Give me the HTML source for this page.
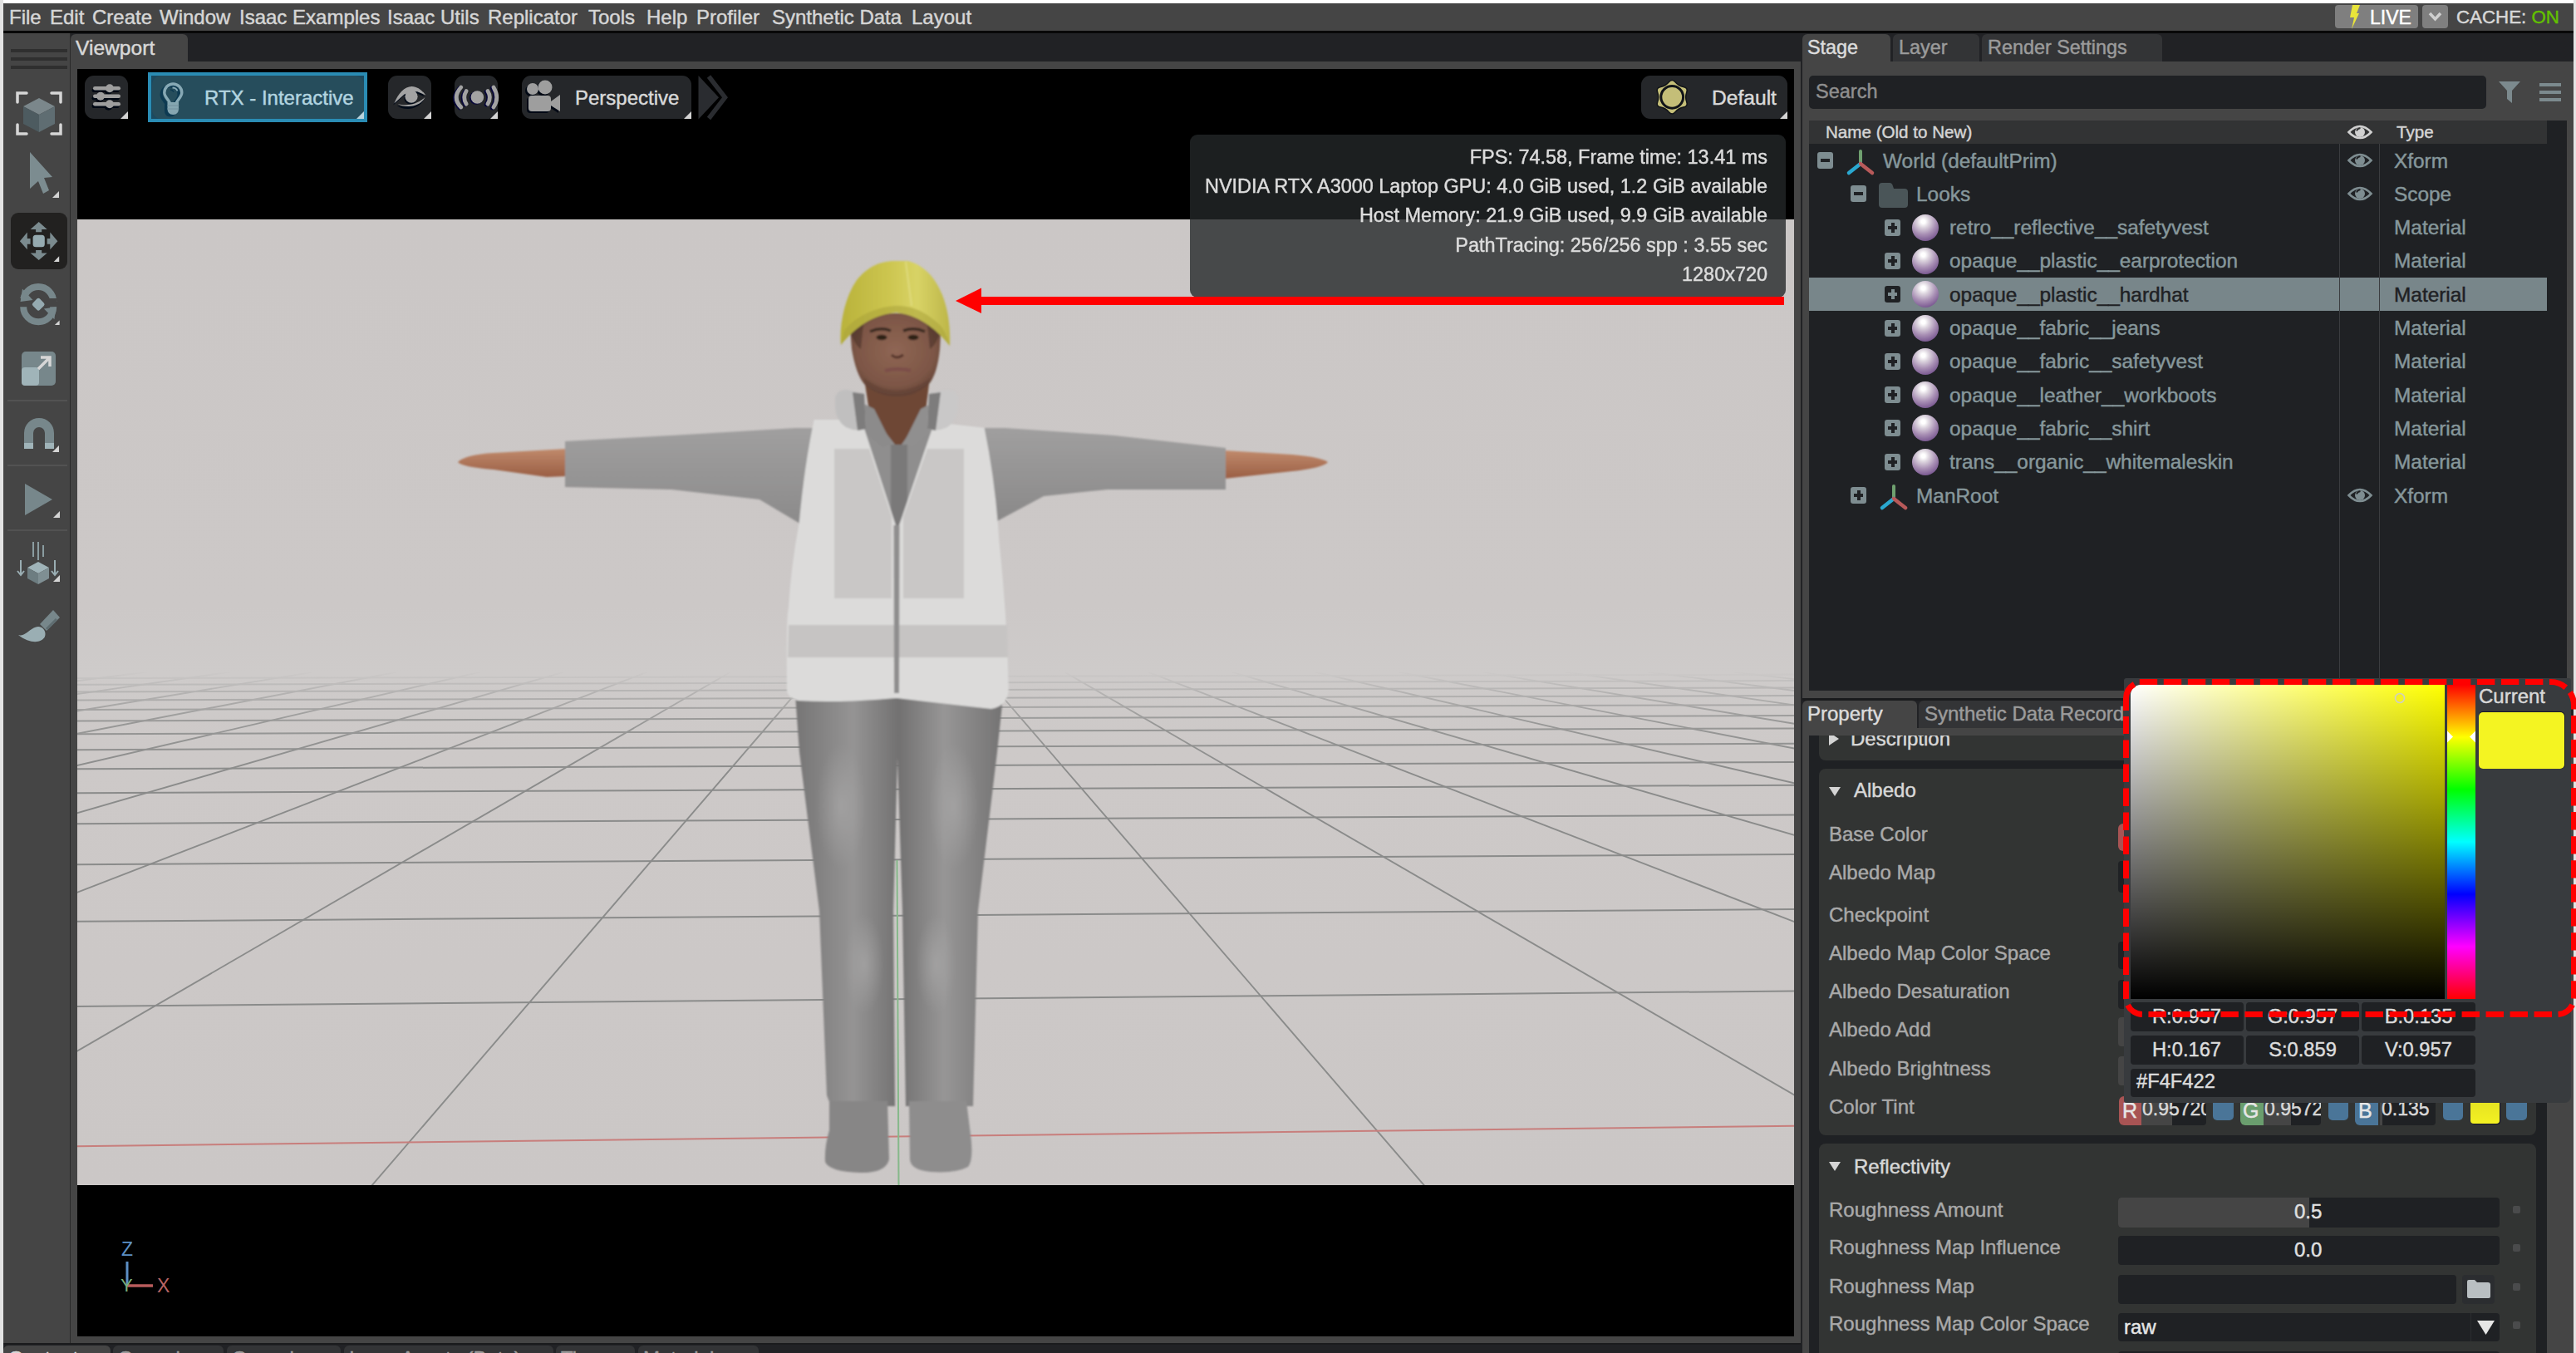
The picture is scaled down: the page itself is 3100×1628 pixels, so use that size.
<!DOCTYPE html>
<html><head><meta charset="utf-8">
<style>
*{margin:0;padding:0;box-sizing:border-box}
html,body{width:3100px;height:1628px;overflow:hidden;background:#ffffff;font-family:"Liberation Sans",sans-serif;font-size:24px;color:#d6d6d6;-webkit-text-stroke-width:0.45px}
.a{position:absolute}
.t{position:absolute;white-space:pre;line-height:1}
svg{position:absolute;overflow:visible}
.btn{position:absolute;background:#25272a;border-radius:11px}
.corner{position:absolute;width:0;height:0;border-left:9px solid transparent;border-bottom:9px solid #d4d4d4}
.tree{color:#86979b}
.row{position:absolute;left:2177px;width:888px;height:40px}
.pm{position:absolute;width:19px;height:20px;background:#7e8d91;border-radius:3px}
.pm:before{content:"";position:absolute;left:4px;top:8px;width:11px;height:4px;background:#1f2124}
.plus:after{content:"";position:absolute;left:8px;top:4px;width:3px;height:12px;background:#1f2124}
.sph{position:absolute;width:32px;height:32px;border-radius:50%;background:radial-gradient(circle at 42% 27%,#ffffff 0,#ffffff 8%,#dcd4de 24%,#a88fb4 52%,#7c5b93 78%,#674680 100%)}
.lbl{position:absolute;white-space:pre;line-height:1;color:#a9a9a9}
.fld{position:absolute;background:#1f2124;border-radius:4px}
</style></head><body>
<!-- outer light borders -->
<div class="a" style="left:0;top:0;width:4px;height:1628px;background:#e3e3e3"></div>
<div class="a" style="left:3097px;top:0;width:3px;height:1628px;background:#e3e3e3"></div>

<!-- ============ MENU BAR ============ -->
<div class="a" style="left:4px;top:4px;width:3093px;height:33px;background:#454545"></div>
<div class="a" style="left:4px;top:37px;width:3093px;height:3px;background:#080808"></div>
<div class="t" style="left:11px;top:9px">File</div>
<div class="t" style="left:60px;top:9px">Edit</div>
<div class="t" style="left:111px;top:9px">Create</div>
<div class="t" style="left:192px;top:9px">Window</div>
<div class="t" style="left:288px;top:9px">Isaac Examples</div>
<div class="t" style="left:466px;top:9px">Isaac Utils</div>
<div class="t" style="left:587px;top:9px">Replicator</div>
<div class="t" style="left:708px;top:9px">Tools</div>
<div class="t" style="left:778px;top:9px">Help</div>
<div class="t" style="left:838px;top:9px">Profiler</div>
<div class="t" style="left:929px;top:9px">Synthetic Data</div>
<div class="t" style="left:1097px;top:9px">Layout</div>
<!-- LIVE / CACHE -->
<div class="a" style="left:2810px;top:6px;width:100px;height:28px;background:#7f7f7f;border-radius:4px"></div>
<svg style="left:2825px;top:6px" width="16" height="29" viewBox="0 0 16 29"><path d="M6 0 L15 0 L11 10 L14 10 L5 29 L8 15 L3 15 Z" fill="#e8e43a"/></svg>
<div class="t" style="left:2852px;top:10px;font-size:23px;color:#ffffff">LIVE</div>
<div class="a" style="left:2915px;top:6px;width:31px;height:28px;background:#7f7f7f;border-radius:4px"></div>
<svg style="left:2922px;top:14px" width="17" height="12" viewBox="0 0 17 12"><path d="M2 2 L8.5 9 L15 2" stroke="#cfcfcf" stroke-width="3.5" fill="none"/></svg>
<div class="t" style="left:2956px;top:10px;font-size:22.3px;color:#d8d8d8">CACHE: <span style="color:#62c100">ON</span></div>

<!-- dark base for tab bars -->
<div class="a" style="left:4px;top:40px;width:3093px;height:1588px;background:#212225"></div>

<!-- ============ LEFT TOOLBAR ============ -->
<div class="a" style="left:4px;top:40px;width:80px;height:1576px;background:#454545"></div>
<div class="a" style="left:84px;top:40px;width:1px;height:1576px;background:#2a2a2a"></div>
<div class="a" style="left:13px;top:59px;width:68px;height:4px;background:#2f2f2f"></div>
<div class="a" style="left:13px;top:69px;width:68px;height:4px;background:#2f2f2f"></div>
<div class="a" style="left:13px;top:79px;width:68px;height:4px;background:#2f2f2f"></div>
<!-- frame icon -->
<svg style="left:19px;top:109px" width="56" height="55" viewBox="0 0 56 55">
 <path d="M2 14 V3 H13 M43 3 H54 V14 M54 41 V52 H43 M13 52 H2 V41" stroke="#d6d6d6" stroke-width="3.5" fill="none" stroke-linecap="round"/>
 <path d="M28 9 L47 19 L28 29 L9 19 Z" fill="#7b878b"/>
 <path d="M9 19 L28 29 L28 50 L9 40 Z" fill="#4d5b60"/>
 <path d="M47 19 L28 29 L28 50 L47 40 Z" fill="#5f6d72"/>
</svg>
<!-- select arrow -->
<svg style="left:33px;top:180px" width="40" height="60" viewBox="0 0 40 60">
 <path d="M3 3 L30 33 L20 34 L26 49 L19 53 L13 38 L3 47 Z" fill="#7c8c90"/>
 <path d="M38 50 L38 58 L30 58 Z" fill="#d4d4d4"/>
</svg>
<!-- move (active) -->
<div class="a" style="left:13px;top:256px;width:68px;height:68px;background:#222120;border-radius:9px"></div>
<svg style="left:13px;top:256px" width="68" height="68" viewBox="13 256 68 68">
 <g fill="#7b8b8f">
  <path d="M46.7 267.1 L56.7 276 L50.2 276 L50.2 279.3 L43.1 279.3 L43.1 276 L36.6 276 Z"/>
  <path d="M46.7 313 L56.7 304.4 L50.2 304.4 L50.2 301 L43.1 301 L43.1 304.4 L36.6 304.4 Z"/>
  <path d="M23.9 290.2 L32.8 279.6 L32.8 287 L36.6 287 L36.6 293.8 L32.8 293.8 L32.8 300.3 Z"/>
  <path d="M69.4 290.2 L60.3 279.6 L60.3 287 L56.7 287 L56.7 293.8 L60.3 293.8 L60.3 300.3 Z"/>
 </g>
 <rect x="39.6" y="282.8" width="14.2" height="14.5" rx="3.5" fill="#95aab0"/>
 <path d="M71.2 308.2 L71.2 315 L64.7 315 Z" fill="#d4d4d4"/>
</svg>
<!-- rotate -->
<svg style="left:13px;top:336px" width="64" height="60" viewBox="13 336 64 60">
 <path d="M28 363.1 A18 18 0 0 1 64.2 363.1" stroke="#77878b" stroke-width="8" fill="none"/>
 <path d="M64.2 369.3 A18 18 0 0 1 28.2 369.3" stroke="#77878b" stroke-width="8" fill="none"/>
 <rect x="24" y="359" width="44" height="4" fill="#454545"/>
 <path d="M27 347.6 L24.5 363 L39.5 361 Z" fill="#77878b"/>
 <path d="M67.4 369.3 L52.9 371.4 L65.4 384.3 Z" fill="#77878b"/>
 <rect x="40.3" y="360.3" width="11.8" height="11.8" rx="2.5" transform="rotate(45 46.2 366.2)" fill="#95aab0"/>
 <path d="M71.6 385.4 L71.6 391 L65.9 391 Z" fill="#d4d4d4"/>
</svg>
<!-- scale -->
<svg style="left:26px;top:423px" width="42" height="42" viewBox="0 0 42 42">
 <rect x="0" y="0" width="41" height="41" rx="5" fill="#77878b"/>
 <rect x="0" y="19" width="21" height="22" rx="4" fill="#a0b4b9"/>
 <path d="M20 21 L34 7 M23 7 H34 V18" stroke="#d6d6d6" stroke-width="3.5" fill="none"/>
</svg>
<div class="a" style="left:9px;top:481px;width:72px;height:2px;background:#525252"></div>
<!-- magnet -->
<svg style="left:28px;top:503px" width="44" height="42" viewBox="0 0 44 42">
 <path d="M1 37 V18 A18 18 0 0 1 37 18 V37 H26 V18 A7 7 0 0 0 12 18 V37 Z" fill="#77878b"/>
 <rect x="1" y="30" width="11" height="7" fill="#a0b4b9"/>
 <rect x="26" y="30" width="11" height="7" fill="#a0b4b9"/>
 <path d="M43 33 L43 41 L35 41 Z" fill="#d4d4d4"/>
</svg>
<div class="a" style="left:9px;top:559px;width:72px;height:2px;background:#525252"></div>
<!-- play -->
<svg style="left:29px;top:581px" width="44" height="44" viewBox="0 0 44 44">
 <path d="M1 1 L34 20 L1 39 Z" fill="#77878b"/>
 <path d="M43 34 L43 42 L35 42 Z" fill="#d4d4d4"/>
</svg>
<div class="a" style="left:9px;top:637px;width:72px;height:2px;background:#525252"></div>
<!-- drop -->
<svg style="left:20px;top:652px" width="56" height="56" viewBox="0 0 56 56">
 <path d="M20 0 V18 M26 0 V22 M32 4 V18" stroke="#8a9ca0" stroke-width="2" fill="none"/>
 <path d="M26 24 L39 31 L26 38 L13 31 Z" fill="#a0b4b9"/>
 <path d="M13 31 L26 38 V51 L13 44 Z" fill="#6d7d81"/>
 <path d="M39 31 L26 38 V51 L39 44 Z" fill="#7f8f93"/>
 <path d="M5 22 V40 M1 35 L5 40 L9 35 M46 22 V40 M42 35 L46 40 L50 35" stroke="#9aaeb3" stroke-width="2" fill="none"/>
 <path d="M52 40 L52 48 L44 48 Z" fill="#d4d4d4"/>
</svg>
<!-- paint -->
<svg style="left:22px;top:733px" width="50" height="42" viewBox="0 0 50 42">
 <path d="M26 18 L42 1 L50 10 L34 26 Z" fill="#77878b"/>
 <path d="M34 24 L46 12" stroke="#5f6d71" stroke-width="3"/>
 <path d="M0 31 C8 34 14 22 24 21 C30 21 34 27 32 33 C28 41 14 42 0 31 Z" fill="#9aaeb3"/>
</svg>

<!-- ============ VIEWPORT PANEL ============ -->
<div class="a" style="left:85px;top:41px;width:141px;height:33px;background:#454545;border-radius:6px 6px 0 0"></div>
<div class="t" style="left:91px;top:46px;font-size:24.6px;color:#d8d8d8">Viewport</div>
<div class="a" style="left:85px;top:74px;width:2082px;height:1542px;background:#454545"></div>
<div class="a" id="vp" style="left:93px;top:83px;width:2066px;height:1525px;background:#000000;overflow:hidden">
<!--RENDER-->
<svg style="left:-93px;top:-83px" width="3100" height="1628" viewBox="0 0 3100 1628">
<defs>
<linearGradient id="bg" x1="0" y1="264" x2="0" y2="1426" gradientUnits="userSpaceOnUse">
 <stop offset="0" stop-color="#cbc7c6"/><stop offset="0.4" stop-color="#ccc8c7"/><stop offset="0.47" stop-color="#cecbca"/><stop offset="0.55" stop-color="#cdc9c8"/><stop offset="1" stop-color="#cbc7c6"/>
</linearGradient>
<linearGradient id="fog" x1="0" y1="808" x2="0" y2="930" gradientUnits="userSpaceOnUse">
 <stop offset="0" stop-color="#fff" stop-opacity="0"/><stop offset="0.16" stop-color="#fff" stop-opacity="0.3"/><stop offset="0.5" stop-color="#fff" stop-opacity="0.8"/><stop offset="1" stop-color="#fff" stop-opacity="1"/>
</linearGradient>
<mask id="fogm" maskUnits="userSpaceOnUse" x="0" y="0" width="3100" height="1628"><rect x="93" y="264" width="2066" height="1162" fill="url(#fog)"/></mask>
<clipPath id="rc"><rect x="93" y="264" width="2066" height="1162"/></clipPath>
<linearGradient id="hat" x1="0" y1="0" x2="1" y2="0">
 <stop offset="0" stop-color="#b9b23a"/><stop offset="0.45" stop-color="#cdc650"/><stop offset="0.7" stop-color="#d8d366"/><stop offset="1" stop-color="#bdb648"/>
</linearGradient>
<linearGradient id="skin" x1="0" y1="0" x2="0" y2="1">
 <stop offset="0" stop-color="#6b4c3e"/><stop offset="0.5" stop-color="#8a6352"/><stop offset="1" stop-color="#7a5444"/>
</linearGradient>
<linearGradient id="hand" x1="0" y1="0" x2="0" y2="1">
 <stop offset="0" stop-color="#c08a6c"/><stop offset="1" stop-color="#9a5e44"/>
</linearGradient>
<linearGradient id="sleeve" x1="0" y1="0" x2="0" y2="1">
 <stop offset="0" stop-color="#a09f9f"/><stop offset="1" stop-color="#8a8989"/>
</linearGradient>
<linearGradient id="jeans" x1="0" y1="0" x2="1" y2="0">
 <stop offset="0" stop-color="#767575"/><stop offset="0.28" stop-color="#959494"/><stop offset="0.5" stop-color="#727171"/><stop offset="0.72" stop-color="#979696"/><stop offset="1" stop-color="#747373"/>
</linearGradient>
<linearGradient id="vest" x1="0" y1="0" x2="1" y2="0">
 <stop offset="0" stop-color="#d0cecd"/><stop offset="0.3" stop-color="#dddbdb"/><stop offset="0.7" stop-color="#dcdada"/><stop offset="1" stop-color="#cfcdcc"/>
</linearGradient>
<filter id="soft" x="-5%" y="-5%" width="110%" height="110%"><feGaussianBlur stdDeviation="1.0"/></filter>
</defs>
<g clip-path="url(#rc)">
<rect x="93" y="264" width="2066" height="1162" fill="url(#bg)"/>
<g mask="url(#fogm)" opacity="0.85"><line x1="93" y1="1210.9" x2="2159" y2="1192.5" stroke="#7f8180" stroke-width="2.0"/><line x1="93" y1="1108.8" x2="2159" y2="1094.0" stroke="#7f8180" stroke-width="2.0"/><line x1="93" y1="1040.3" x2="2159" y2="1028.0" stroke="#7f8180" stroke-width="2.0"/><line x1="93" y1="991.2" x2="2159" y2="980.5" stroke="#7f8180" stroke-width="2.0"/><line x1="93" y1="954.2" x2="2159" y2="944.8" stroke="#7f8180" stroke-width="2.0"/><line x1="93" y1="925.3" x2="2159" y2="917.0" stroke="#7f8180" stroke-width="2.0"/><line x1="93" y1="902.2" x2="2159" y2="894.7" stroke="#7f8180" stroke-width="2.0"/><line x1="93" y1="883.2" x2="2159" y2="876.4" stroke="#7f8180" stroke-width="2.0"/><line x1="93" y1="867.4" x2="2159" y2="861.1" stroke="#7f8180" stroke-width="2.0"/><line x1="93" y1="854.0" x2="2159" y2="848.2" stroke="#7f8180" stroke-width="2.0"/><line x1="93" y1="842.5" x2="2159" y2="837.1" stroke="#7f8180" stroke-width="2.0"/><line x1="93" y1="832.5" x2="2159" y2="827.5" stroke="#7f8180" stroke-width="2.0"/><line x1="93" y1="823.8" x2="2159" y2="819.1" stroke="#7f8180" stroke-width="2.0"/><line x1="93" y1="816.1" x2="2159" y2="811.6" stroke="#7f8180" stroke-width="2.0"/><line x1="1080.0" y1="692.0" x2="-17931.8" y2="1427" stroke="#7f8180" stroke-width="1.9"/><line x1="1080.0" y1="692.0" x2="-17298.0" y2="1427" stroke="#7f8180" stroke-width="1.9"/><line x1="1080.0" y1="692.0" x2="-16664.2" y2="1427" stroke="#7f8180" stroke-width="1.9"/><line x1="1080.0" y1="692.0" x2="-16030.5" y2="1427" stroke="#7f8180" stroke-width="1.9"/><line x1="1080.0" y1="692.0" x2="-15396.8" y2="1427" stroke="#7f8180" stroke-width="1.9"/><line x1="1080.0" y1="692.0" x2="-14763.0" y2="1427" stroke="#7f8180" stroke-width="1.9"/><line x1="1080.0" y1="692.0" x2="-14129.2" y2="1427" stroke="#7f8180" stroke-width="1.9"/><line x1="1080.0" y1="692.0" x2="-13495.5" y2="1427" stroke="#7f8180" stroke-width="1.9"/><line x1="1080.0" y1="692.0" x2="-12861.8" y2="1427" stroke="#7f8180" stroke-width="1.9"/><line x1="1080.0" y1="692.0" x2="-12228.0" y2="1427" stroke="#7f8180" stroke-width="1.9"/><line x1="1080.0" y1="692.0" x2="-11594.2" y2="1427" stroke="#7f8180" stroke-width="1.9"/><line x1="1080.0" y1="692.0" x2="-10960.5" y2="1427" stroke="#7f8180" stroke-width="1.9"/><line x1="1080.0" y1="692.0" x2="-10326.8" y2="1427" stroke="#7f8180" stroke-width="1.9"/><line x1="1080.0" y1="692.0" x2="-9693.0" y2="1427" stroke="#7f8180" stroke-width="1.9"/><line x1="1080.0" y1="692.0" x2="-9059.2" y2="1427" stroke="#7f8180" stroke-width="1.9"/><line x1="1080.0" y1="692.0" x2="-8425.5" y2="1427" stroke="#7f8180" stroke-width="1.9"/><line x1="1080.0" y1="692.0" x2="-7791.8" y2="1427" stroke="#7f8180" stroke-width="1.9"/><line x1="1080.0" y1="692.0" x2="-7158.0" y2="1427" stroke="#7f8180" stroke-width="1.9"/><line x1="1080.0" y1="692.0" x2="-6524.2" y2="1427" stroke="#7f8180" stroke-width="1.9"/><line x1="1080.0" y1="692.0" x2="-5890.5" y2="1427" stroke="#7f8180" stroke-width="1.9"/><line x1="1080.0" y1="692.0" x2="-5256.8" y2="1427" stroke="#7f8180" stroke-width="1.9"/><line x1="1080.0" y1="692.0" x2="-4623.0" y2="1427" stroke="#7f8180" stroke-width="1.9"/><line x1="1080.0" y1="692.0" x2="-3989.2" y2="1427" stroke="#7f8180" stroke-width="1.9"/><line x1="1080.0" y1="692.0" x2="-3355.5" y2="1427" stroke="#7f8180" stroke-width="1.9"/><line x1="1080.0" y1="692.0" x2="-2721.8" y2="1427" stroke="#7f8180" stroke-width="1.9"/><line x1="1080.0" y1="692.0" x2="-2088.0" y2="1427" stroke="#7f8180" stroke-width="1.9"/><line x1="1080.0" y1="692.0" x2="-1454.2" y2="1427" stroke="#7f8180" stroke-width="1.9"/><line x1="1080.0" y1="692.0" x2="-820.5" y2="1427" stroke="#7f8180" stroke-width="1.9"/><line x1="1080.0" y1="692.0" x2="-186.8" y2="1427" stroke="#7f8180" stroke-width="1.9"/><line x1="1080.0" y1="692.0" x2="447.0" y2="1427" stroke="#7f8180" stroke-width="1.9"/><line x1="1080.0" y1="692.0" x2="1714.5" y2="1427" stroke="#7f8180" stroke-width="1.9"/><line x1="1080.0" y1="692.0" x2="2348.2" y2="1427" stroke="#7f8180" stroke-width="1.9"/><line x1="1080.0" y1="692.0" x2="2982.0" y2="1427" stroke="#7f8180" stroke-width="1.9"/><line x1="1080.0" y1="692.0" x2="3615.8" y2="1427" stroke="#7f8180" stroke-width="1.9"/><line x1="1080.0" y1="692.0" x2="4249.5" y2="1427" stroke="#7f8180" stroke-width="1.9"/><line x1="1080.0" y1="692.0" x2="4883.2" y2="1427" stroke="#7f8180" stroke-width="1.9"/><line x1="1080.0" y1="692.0" x2="5517.0" y2="1427" stroke="#7f8180" stroke-width="1.9"/><line x1="1080.0" y1="692.0" x2="6150.8" y2="1427" stroke="#7f8180" stroke-width="1.9"/><line x1="1080.0" y1="692.0" x2="6784.5" y2="1427" stroke="#7f8180" stroke-width="1.9"/><line x1="1080.0" y1="692.0" x2="7418.2" y2="1427" stroke="#7f8180" stroke-width="1.9"/><line x1="1080.0" y1="692.0" x2="8052.0" y2="1427" stroke="#7f8180" stroke-width="1.9"/><line x1="1080.0" y1="692.0" x2="8685.8" y2="1427" stroke="#7f8180" stroke-width="1.9"/><line x1="1080.0" y1="692.0" x2="9319.5" y2="1427" stroke="#7f8180" stroke-width="1.9"/><line x1="1080.0" y1="692.0" x2="9953.2" y2="1427" stroke="#7f8180" stroke-width="1.9"/><line x1="1080.0" y1="692.0" x2="10587.0" y2="1427" stroke="#7f8180" stroke-width="1.9"/><line x1="1080.0" y1="692.0" x2="11220.8" y2="1427" stroke="#7f8180" stroke-width="1.9"/><line x1="1080.0" y1="692.0" x2="11854.5" y2="1427" stroke="#7f8180" stroke-width="1.9"/><line x1="1080.0" y1="692.0" x2="12488.2" y2="1427" stroke="#7f8180" stroke-width="1.9"/><line x1="1080.0" y1="692.0" x2="13122.0" y2="1427" stroke="#7f8180" stroke-width="1.9"/><line x1="1080.0" y1="692.0" x2="13755.8" y2="1427" stroke="#7f8180" stroke-width="1.9"/><line x1="1080.0" y1="692.0" x2="14389.5" y2="1427" stroke="#7f8180" stroke-width="1.9"/><line x1="1080.0" y1="692.0" x2="15023.2" y2="1427" stroke="#7f8180" stroke-width="1.9"/><line x1="1080.0" y1="692.0" x2="15657.0" y2="1427" stroke="#7f8180" stroke-width="1.9"/><line x1="1080.0" y1="692.0" x2="16290.8" y2="1427" stroke="#7f8180" stroke-width="1.9"/><line x1="1080.0" y1="692.0" x2="16924.5" y2="1427" stroke="#7f8180" stroke-width="1.9"/><line x1="1080.0" y1="692.0" x2="17558.2" y2="1427" stroke="#7f8180" stroke-width="1.9"/><line x1="1080.0" y1="692.0" x2="18192.0" y2="1427" stroke="#7f8180" stroke-width="1.9"/><line x1="1080.0" y1="692.0" x2="18825.8" y2="1427" stroke="#7f8180" stroke-width="1.9"/><line x1="1080.0" y1="692.0" x2="19459.5" y2="1427" stroke="#7f8180" stroke-width="1.9"/><line x1="1080.0" y1="692.0" x2="20093.2" y2="1427" stroke="#7f8180" stroke-width="1.9"/></g>
<line x1="93" y1="1379.2" x2="2159" y2="1354.7" stroke="#c87e7c" stroke-width="2"/>
<line x1="1079.5" y1="1035" x2="1081.5" y2="1427" stroke="#86b88a" stroke-width="2"/>
<g id="figure" filter="url(#soft)">
 <!-- hands -->
 <path d="M551 556 Q560 547 594 545 L682 540 L682 573 L658 574 L594 565 Q556 562 551 556 Z" fill="url(#hand)"/>
 <path d="M1473 542 L1555 547 Q1590 550 1598 556 Q1592 563 1555 567 L1473 576 Z" fill="url(#hand)"/>
 <!-- sleeves -->
 <path d="M680 531 L808 524 L957 515 L990 515 L1000 560 L975 640 L961 629 L914 601 L808 589 L680 586 Z" fill="url(#sleeve)"/>
 <path d="M1170 515 L1210 515 L1341 524 L1475 539 L1475 589 L1333 589 L1256 597 L1200 627 L1175 600 Z" fill="url(#sleeve)"/>
 <!-- jeans -->
 <path d="M957 835 L1206 835 L1206 848 L1200 905 L1177 1096 L1171 1331 L1090 1331 L1086 1096 L1080 912 L1075 1096 L1077 1331 L1000 1331 L995 1318 L986 1096 L962 905 Z" fill="url(#jeans)"/>
 <defs><radialGradient id="hl"><stop offset="0" stop-color="#b0afaf" stop-opacity="0.55"/><stop offset="1" stop-color="#b0afaf" stop-opacity="0"/></radialGradient></defs>
 <ellipse cx="1012" cy="970" rx="30" ry="75" fill="url(#hl)"/>
 <ellipse cx="1148" cy="970" rx="30" ry="75" fill="url(#hl)"/>
 <ellipse cx="1040" cy="1160" rx="24" ry="60" fill="url(#hl)"/>
 <ellipse cx="1126" cy="1160" rx="24" ry="60" fill="url(#hl)"/>
 <!-- boots -->
 <path d="M998 1325 L1068 1325 L1070 1395 Q1066 1412 1035 1411 Q998 1410 993 1398 Q992 1380 998 1360 Z" fill="#878686"/>
 <path d="M1094 1325 L1163 1325 L1168 1365 Q1172 1395 1165 1404 Q1150 1412 1120 1410 Q1096 1408 1095 1395 Z" fill="#8e8d8d"/>
 <!-- shirt torso under vest -->
 <path d="M1030 495 L1130 495 L1130 640 L1030 640 Z" fill="#8f8e8e"/>
 <!-- neck skin -->
 <path d="M1041 462 L1118 462 L1114 495 L1081 540 L1046 495 Z" fill="#6e4734"/>
 <!-- collar -->
 <path d="M1036 484 L1052 492 L1073 534 L1062 538 L1040 520 Z" fill="#8c8b8b"/>
 <path d="M1124 484 L1108 492 L1087 534 L1098 538 L1120 520 Z" fill="#908f8f"/>
 <rect x="1072" y="535" width="20" height="98" fill="#7a7979"/>
 <!-- vest -->
 <path d="M979.7 505 L1036.6 505 L1078 632 L1082 632 L1124.4 508 L1184.6 514.8 Q1198 580 1202.4 651 Q1212 740 1213.8 830 Q1212 850 1192.7 853 Q1130 846 1079 840 Q1010 846 960 843 Q946 838 947 830 Q946 740 948.8 732.7 Q952 680 961.8 628.6 Q968 560 979.7 505 Z" fill="#dcdbda"/>
 <path d="M1004 540 L1046 540 L1073 622 L1073 720 L1004 720 Z" fill="#c9c7c6"/>
 <path d="M1087 622 L1116 540 L1160 540 L1160 720 L1087 720 Z" fill="#c9c7c6"/>
 <path d="M949 752 L1212 752 L1213 791 L948 791 Z" fill="#c6c4c3"/>
 <path d="M1075.5 632 L1082.5 632 L1082 834 L1076 834 Z" fill="#8f8e8e"/>
 <!-- earmuffs -->
 <path d="M1005 478 Q1008 468 1020 469 L1040 474 L1042 516 Q1030 520 1018 514 Q1006 506 1005 490 Z" fill="#c0bfbf"/>
 <path d="M1153 478 Q1150 468 1138 469 L1118 474 L1116 516 Q1128 520 1140 514 Q1152 506 1153 490 Z" fill="#c9c8c8"/>
 <path d="M1026 472 L1040 474 L1042 516 L1032 518 Z" fill="#7d7c7c"/>
 <path d="M1132 472 L1118 474 L1116 516 L1126 518 Z" fill="#7d7c7c"/>
 <!-- face -->
 <defs><radialGradient id="facegr" cx="0.5" cy="0.45" r="0.6"><stop offset="0" stop-color="#8f6654"/><stop offset="0.7" stop-color="#7d5646"/><stop offset="1" stop-color="#5e4034"/></radialGradient></defs>
 <path d="M1022 382 Q1077 372 1133 382 L1131 420 Q1128 450 1118 462 Q1100 478 1079 477 Q1055 477 1040 462 Q1030 450 1025 420 Z" fill="url(#facegr)"/>
 <path d="M1022 395 Q1028 380 1040 380 L1036 420 Q1028 415 1022 395 Z M1133 395 Q1127 380 1115 380 L1119 420 Q1127 415 1133 395 Z" fill="#4a3228" opacity="0.6"/>
 <path d="M1047 399 Q1060 393 1072 398 M1087 398 Q1100 393 1113 399" stroke="#3b2a22" stroke-width="3.5" fill="none"/>
 <ellipse cx="1061" cy="406" rx="6.5" ry="3.2" fill="#2e2019"/>
 <ellipse cx="1099" cy="406" rx="6.5" ry="3.2" fill="#2e2019"/>
 <path d="M1073 427 Q1079 433 1087 427" stroke="#553429" stroke-width="3" fill="none"/>
 <path d="M1065 446 Q1080 442 1096 446" stroke="#7c4e4a" stroke-width="4" fill="none"/>
 <path d="M1040 455 Q1079 485 1120 455 L1118 462 Q1100 478 1079 477 Q1055 477 1040 462 Z" fill="#5e3e32" opacity="0.5"/>
 <!-- hardhat -->
 <path d="M1012 415 C1010 395 1015 360 1031 337 C1045 320 1060 314 1078 314 L1092 314 C1110 318 1125 332 1134 355 C1141 372 1144 395 1143 416 C1130 400 1110 380 1079 376 C1050 378 1028 395 1012 415 Z" fill="url(#hat)"/>
 <path d="M1012 415 C1028 395 1050 378 1079 376 C1110 380 1130 400 1143 416 C1140 405 1136 396 1130 390 C1110 372 1095 368 1079 368 C1055 369 1030 380 1016 398 Z" fill="#a9a23a" opacity="0.55"/>
 <path d="M1090 315 L1097 368" stroke="#e6e290" stroke-width="2" opacity="0.6"/>
</g>

</g></svg>
</div>
<!-- settings button -->
<div class="btn" style="left:102px;top:91px;width:52px;height:52px"></div>
<div class="corner" style="left:145px;top:134px"></div>
<svg style="left:110px;top:101px" width="38" height="34" viewBox="0 0 38 34">
 <g fill="#000814" transform="translate(-1.5,2.5)">
  <rect x="2" y="3" width="33" height="4.5" rx="2.2"/><rect x="2" y="12.5" width="33" height="4.5" rx="2.2"/><rect x="2" y="22" width="33" height="4.5" rx="2.2"/>
  <circle cx="22" cy="5.2" r="5"/><circle cx="11" cy="14.7" r="5"/><circle cx="22" cy="24.2" r="5"/>
 </g>
 <g fill="#9e9e9e">
  <rect x="2" y="3" width="33" height="4.5" rx="2.2"/><rect x="2" y="12.5" width="33" height="4.5" rx="2.2"/><rect x="2" y="22" width="33" height="4.5" rx="2.2"/>
  <circle cx="22" cy="5.2" r="5"/><circle cx="11" cy="14.7" r="5"/><circle cx="22" cy="24.2" r="5"/>
 </g>
</svg>
<!-- RTX button -->
<div class="a" style="left:178px;top:87px;width:264px;height:60px;background:#2a8cb4"></div>
<div class="a" style="left:182px;top:91px;width:256px;height:52px;background:#1b4a60"></div>
<div class="a" style="left:183px;top:91px;width:255px;height:52px;background:#264d5c;border-radius:11px"></div>
<div class="corner" style="left:429px;top:134px;border-bottom-color:#b9d3dc"></div>
<svg style="left:185px;top:92px" width="45" height="52" viewBox="185 92 45 52">
 <g transform="translate(-3.5,2.5)">
  <path d="M204.5 124 C202 119 197.8 116 197.8 111.5 A10.5 10.5 0 0 1 218.8 111.5 C218.8 116 214.6 119 212.1 124" fill="none" stroke="#0d3a52" stroke-width="3.6"/>
  <path d="M201.5 123 H215 V131 Q215 137.5 208.3 138 Q201.5 137.5 201.5 131 Z" fill="#0d3a52"/>
 </g>
 <path d="M204.5 124 C202 119 197.8 116 197.8 111.5 A10.5 10.5 0 0 1 218.8 111.5 C218.8 116 214.6 119 212.1 124" fill="none" stroke="#87a9b5" stroke-width="3.4"/>
 <path d="M201.5 123 H215 V131 Q215 137.5 208.3 138 Q201.5 137.5 201.5 131 Z" fill="#85a6b1"/>
 <path d="M201 127 h14.5 M201 131 h14.5" stroke="#6f8e99" stroke-width="0.8"/>
 <path d="M207.5 105.5 Q212 105.5 213.5 109.5" stroke="#87a9b5" stroke-width="1.8" fill="none"/>
 <path d="M205 108 Q207.5 108 209 110.5" stroke="#0d3a52" stroke-width="1.5" fill="none"/>
</svg>
<div class="t" style="left:246px;top:105.5px;color:#b3d5e0">RTX - Interactive</div>
<!-- eye button -->
<div class="btn" style="left:467px;top:91px;width:52px;height:52px"></div>
<div class="corner" style="left:510px;top:134px"></div>
<svg style="left:462px;top:86px" width="60" height="60" viewBox="0 0 60 60">
 <g fill="#000a18" transform="translate(-1,2)">
  <path d="M12.3 38.6 C17 26 25 18 33.5 17.9 C41 18 46 23 50.3 28.5 L40.2 24.2 C36 24 30 24.5 24.6 27.4 Z"/>
  <path d="M16.5 39 C26 41.5 39 41 49.5 31 C46 38.5 38 43 30 43 C24 43 20 41.5 16.5 39 Z"/>
 </g>
 <circle cx="32" cy="32" r="7.6" fill="#000a18"/>
 <path d="M12.3 38.6 C17 26 25 18 33.5 17.9 C41 18 46 23 50.3 28.5 L40.2 24.2 C36 24 30 24.5 24.6 27.4 Z" fill="#a3a3a3"/>
 <circle cx="33" cy="30.2" r="7.6" fill="#a3a3a3"/>
 <path d="M16.5 39 C26 41.5 39 41 49.5 31 C46 38.5 38 42 30 42 C24 42 20 41 16.5 39 Z" fill="#a3a3a3"/>
</svg>
<!-- broadcast button -->
<div class="btn" style="left:547px;top:91px;width:52px;height:52px"></div>
<div class="corner" style="left:590px;top:134px"></div>
<svg style="left:540px;top:95px" width="70" height="45" viewBox="540 95 70 45">
 <g fill="none" stroke="#08083a" stroke-width="5" stroke-linecap="round" transform="translate(-1.6,0.8)">
  <path d="M554.8 105 Q543.6 117.6 554.8 129"/><path d="M561.2 109.5 Q556.2 117.3 561.2 125.1"/>
  <path d="M586.9 109.5 Q591.9 117.3 586.9 125.1"/><path d="M593.9 105 Q601.7 117.6 593.9 129"/>
 </g>
 <circle cx="573" cy="117.8" r="8" fill="#08083a"/>
 <g fill="none" stroke="#a3a3a3" stroke-width="4.8" stroke-linecap="round">
  <path d="M554.8 105 Q543.6 117.6 554.8 129"/><path d="M561.2 109.5 Q556.2 117.3 561.2 125.1"/>
  <path d="M586.9 109.5 Q591.9 117.3 586.9 125.1"/><path d="M593.9 105 Q601.7 117.6 593.9 129"/>
 </g>
 <circle cx="574.4" cy="117" r="7.8" fill="#a3a3a3"/>
</svg>
<!-- perspective button -->
<div class="btn" style="left:628px;top:91px;width:204px;height:52px"></div>
<div class="corner" style="left:823px;top:134px"></div>
<svg style="left:630px;top:96px" width="46" height="42" viewBox="0 0 46 42">
 <g fill="#000814" transform="translate(-2,2)">
  <circle cx="11" cy="11" r="7"/><circle cx="26" cy="9" r="8.5"/><rect x="6" y="19" width="27" height="19" rx="4"/><path d="M33 26 L44 18 V38 L33 31 Z"/>
 </g>
 <g fill="#9e9e9e">
  <circle cx="11" cy="11" r="7"/><circle cx="26" cy="9" r="8.5"/><rect x="6" y="19" width="27" height="19" rx="4"/><path d="M33 26 L44 18 V38 L33 31 Z"/>
 </g>
</svg>
<div class="t" style="left:692px;top:105.5px;color:#d9d9d9">Perspective</div>
<!-- chevron -->
<svg style="left:835px;top:86px" width="45" height="62" viewBox="835 86 45 62">
 <path d="M840.5 91 L865 117.3 L840.5 143.5 Z" fill="#2a2c30"/>
 <path d="M840.5 91 L865 117.3 L840.5 143.5" fill="none" stroke="#000" stroke-width="2.2" transform="translate(3.5,0)"/>
 <path d="M853 92 L872.5 117.3 L853 142.5" fill="none" stroke="#2a2c30" stroke-width="5.5"/>
</svg>
<!-- Default light button -->
<div class="btn" style="left:1975px;top:91px;width:176px;height:52px"></div>
<div class="corner" style="left:2142px;top:134px"></div>
<svg style="left:1985px;top:90px" width="56" height="56" viewBox="1985 90 56 56">
 <path d="M2008.3 98.8 Q2012.2 94.3 2016.1 98.8 Q2020.0 103.4 2025.8 104.5 Q2031.7 105.5 2029.7 111.2 Q2027.7 116.8 2029.7 122.4 Q2031.7 128.0 2025.8 129.1 Q2020.0 130.2 2016.1 134.8 Q2012.2 139.3 2008.3 134.8 Q2004.5 130.2 1998.6 129.1 Q1992.7 128.0 1994.7 122.4 Q1996.7 116.8 1994.7 111.2 Q1992.7 105.5 1998.6 104.5 Q2004.5 103.4 2008.3 98.8 Z" fill="#c4be78" stroke="#111418" stroke-width="1.5"/>
 <circle cx="2012.2" cy="116.8" r="13.4" fill="#c4be78" stroke="#111418" stroke-width="3"/>
</svg>
<div class="t" style="left:2060px;top:105.5px;font-size:24.6px;color:#dadada">Default</div>
<!-- stats overlay -->
<div class="a" style="left:1432px;top:162px;width:717px;height:196px;background:rgba(35,39,41,0.79);border-radius:9px"></div>
<div class="a" style="left:1432px;top:172px;width:695px;text-align:right;line-height:35.2px;color:#dcdcdc;font-size:23.45px;white-space:pre">FPS: 74.58, Frame time: 13.41 ms
NVIDIA RTX A3000 Laptop GPU: 4.0 GiB used, 1.2 GiB available
Host Memory: 21.9 GiB used, 9.9 GiB available
PathTracing: 256/256 spp : 3.55 sec
1280x720</div>
<!-- red arrow -->
<div class="a" style="left:1178px;top:357px;width:969px;height:10px;background:#ff0000"></div>
<svg style="left:1150px;top:346px" width="32" height="32" viewBox="0 0 32 32"><path d="M0 16 L31 0.5 L31 31 Z" fill="#ff0000"/></svg>
<!-- axis gizmo -->
<svg style="left:140px;top:1490px" width="70" height="70" viewBox="0 0 70 70">
 <text x="6" y="21" font-family="Liberation Sans" font-size="23" fill="#5c8fc4">Z</text>
 <path d="M13 28 V58" stroke="#5c8fc4" stroke-width="3"/>
 <path d="M13 57 H44" stroke="#b85c5c" stroke-width="3.5"/>
 <text x="5" y="64" font-family="Liberation Sans" font-size="22" fill="#7cb07c">Y</text>
 <text x="49" y="65" font-family="Liberation Sans" font-size="23" fill="#b86464">X</text>
</svg>


<!-- bottom tabs -->
<div class="a" style="left:4px;top:1616px;width:2163px;height:2px;background:#1a1b1d"></div>
<div class="a" style="left:4px;top:1618.5px;width:129px;height:12px;background:#454545;border-radius:6px 6px 0 0"></div>
<div class="a" style="left:136px;top:1618.5px;width:133px;height:12px;background:#333436;border-radius:6px 6px 0 0"></div>
<div class="a" style="left:272.5px;top:1618.5px;width:137px;height:12px;background:#333436;border-radius:6px 6px 0 0"></div>
<div class="a" style="left:413.5px;top:1618.5px;width:252px;height:12px;background:#333436;border-radius:6px 6px 0 0"></div>
<div class="a" style="left:669px;top:1618.5px;width:95px;height:12px;background:#333436;border-radius:6px 6px 0 0"></div>
<div class="a" style="left:767.5px;top:1618.5px;width:145px;height:12px;background:#333436;border-radius:6px 6px 0 0"></div>
<div class="t" style="left:10px;top:1623px;color:#d8d8d8">Content</div>
<div class="t" style="left:142px;top:1623px;color:#9b9b9b">Console</div>
<div class="t" style="left:279px;top:1623px;color:#9b9b9b">Console</div>
<div class="t" style="left:420px;top:1623px;color:#9b9b9b">Isaac Assets (Beta)</div>
<div class="t" style="left:675px;top:1623px;color:#9b9b9b">Timer</div>
<div class="t" style="left:774px;top:1623px;color:#9b9b9b">Materials</div>

<!-- ============ STAGE PANEL ============ -->
<div class="a" style="left:2169px;top:74px;width:928px;height:766px;background:#454545"></div>
<!--STAGE-->
<div class="a" style="left:2169px;top:41px;width:106px;height:33px;background:#454545;border-radius:6px 6px 0 0"></div>
<div class="t" style="left:2175px;top:45.5px;font-size:23.4px;color:#dcdcdc">Stage</div>
<div class="a" style="left:2278px;top:41px;width:104px;height:33px;background:#333436;border-radius:6px 6px 0 0"></div>
<div class="t" style="left:2285px;top:45.5px;font-size:23.4px;color:#9b9b9b">Layer</div>
<div class="a" style="left:2385px;top:41px;width:217px;height:33px;background:#333436;border-radius:6px 6px 0 0"></div>
<div class="t" style="left:2392px;top:45.5px;font-size:23.4px;color:#9b9b9b">Render Settings</div>
<div class="fld" style="left:2177px;top:91px;width:815px;height:40px;border-radius:5px"></div>
<div class="t" style="left:2185px;top:99.3px;font-size:23.5px;color:#8f8f8f">Search</div>
<svg style="left:3007px;top:98px" width="27" height="27" viewBox="0 0 27 27"><path d="M0 0 H26 L16 11 V26 L10 21 V11 Z" fill="#7c8a8e"/></svg>
<div class="a" style="left:3056px;top:100px;width:26px;height:4px;background:#7c8a8e"></div>
<div class="a" style="left:3056px;top:109px;width:26px;height:4px;background:#7c8a8e"></div>
<div class="a" style="left:3056px;top:118px;width:26px;height:4px;background:#7c8a8e"></div>
<div class="a" style="left:2177px;top:145px;width:912px;height:686px;background:#1f2124"></div>
<div class="a" style="left:2177px;top:145px;width:888px;height:28px;background:#323334"></div>
<div class="t" style="left:2197px;top:148.5px;font-size:20.6px;color:#d4d4d4">Name (Old to New)</div>
<div class="t" style="left:2884px;top:148.5px;font-size:20.6px;color:#d4d4d4">Type</div>
<svg style="left:2825px;top:149px" width="30" height="20" viewBox="0 0 30 20"><path d="M1.5 10 Q15 -4 28.5 10 Q15 24 1.5 10 Z" fill="none" stroke="#d0d0d0" stroke-width="2.6"/><circle cx="15" cy="10" r="6" fill="#d0d0d0"/><path d="M11 8.5 Q12 5.5 15.5 5" stroke="#323334" stroke-width="1.8" fill="none"/></svg>
<div class="a" style="left:2177px;top:334.2px;width:888px;height:40.3px;background:#78868a"></div>
<div class="a" style="left:2815px;top:173px;width:1px;height:658px;background:#3b3d40"></div>
<div class="a" style="left:2863px;top:173px;width:1px;height:658px;background:#3b3d40"></div>
<div class="a" style="left:2187px;top:183.0px;width:19px;height:20px;background:#7e8d91;border-radius:3px"></div>
<div class="a" style="left:2191px;top:191.0px;width:11px;height:4px;background:#1f2124"></div>
<svg style="left:2222px;top:180.0px" width="34" height="32" viewBox="0 0 34 32"><path d="M17 2 V17" stroke="#6fa06f" stroke-width="4" stroke-linecap="round"/><path d="M17 17 L3 28" stroke="#2aa8d0" stroke-width="4.5" stroke-linecap="round"/><path d="M17 17 L31 28" stroke="#b85a5a" stroke-width="4.5" stroke-linecap="round"/></svg>
<div class="t" style="left:2266px;top:181.5px;font-size:24.4px;color:#86979b">World (defaultPrim)</div>
<div class="t" style="left:2881px;top:181.5px;font-size:24.4px;color:#86979b">Xform</div>
<svg style="left:2825px;top:183.0px" width="30" height="20" viewBox="0 0 30 20"><path d="M1.5 10 Q15 -4 28.5 10 Q15 24 1.5 10 Z" fill="none" stroke="#7e8d91" stroke-width="2.6"/><circle cx="15" cy="10" r="6" fill="#7e8d91"/><path d="M11 8.5 Q12 5.5 15.5 5" stroke="#1f2124" stroke-width="1.8" fill="none"/></svg>
<div class="a" style="left:2227px;top:223.3px;width:19px;height:20px;background:#7e8d91;border-radius:3px"></div>
<div class="a" style="left:2231px;top:231.3px;width:11px;height:4px;background:#1f2124"></div>
<svg style="left:2261px;top:220.3px" width="35" height="30" viewBox="0 0 35 30"><path d="M0 4 Q0 0 4 0 H13 Q16 0 17 4 L18 7 H31 Q35 7 35 11 V26 Q35 30 31 30 H4 Q0 30 0 26 Z" fill="#4a5558"/></svg>
<div class="t" style="left:2306px;top:221.8px;font-size:24.4px;color:#86979b">Looks</div>
<div class="t" style="left:2881px;top:221.8px;font-size:24.4px;color:#86979b">Scope</div>
<svg style="left:2825px;top:223.3px" width="30" height="20" viewBox="0 0 30 20"><path d="M1.5 10 Q15 -4 28.5 10 Q15 24 1.5 10 Z" fill="none" stroke="#7e8d91" stroke-width="2.6"/><circle cx="15" cy="10" r="6" fill="#7e8d91"/><path d="M11 8.5 Q12 5.5 15.5 5" stroke="#1f2124" stroke-width="1.8" fill="none"/></svg>
<div class="a" style="left:2268px;top:263.6px;width:19px;height:20px;background:#7e8d91;border-radius:3px"></div>
<div class="a" style="left:2272px;top:271.6px;width:11px;height:4px;background:#1f2124"></div>
<div class="a" style="left:2276px;top:267.6px;width:3.5px;height:12px;background:#1f2124"></div>
<div class="sph" style="left:2301px;top:257.6px"></div>
<div class="t" style="left:2346px;top:262.1px;font-size:24.4px;color:#86979b">retro__reflective__safetyvest</div>
<div class="t" style="left:2881px;top:262.1px;font-size:24.4px;color:#86979b">Material</div>
<div class="a" style="left:2268px;top:303.9px;width:19px;height:20px;background:#7e8d91;border-radius:3px"></div>
<div class="a" style="left:2272px;top:311.9px;width:11px;height:4px;background:#1f2124"></div>
<div class="a" style="left:2276px;top:307.9px;width:3.5px;height:12px;background:#1f2124"></div>
<div class="sph" style="left:2301px;top:297.9px"></div>
<div class="t" style="left:2346px;top:302.4px;font-size:24.4px;color:#86979b">opaque__plastic__earprotection</div>
<div class="t" style="left:2881px;top:302.4px;font-size:24.4px;color:#86979b">Material</div>
<div class="a" style="left:2268px;top:344.2px;width:19px;height:20px;background:#1f2124;border-radius:3px"></div>
<div class="a" style="left:2272px;top:352.2px;width:11px;height:4px;background:#7e8d91"></div>
<div class="a" style="left:2276px;top:348.2px;width:3.5px;height:12px;background:#7e8d91"></div>
<div class="sph" style="left:2301px;top:338.2px"></div>
<div class="t" style="left:2346px;top:342.7px;font-size:24.4px;color:#1f2124">opaque__plastic__hardhat</div>
<div class="t" style="left:2881px;top:342.7px;font-size:24.4px;color:#1f2124">Material</div>
<div class="a" style="left:2268px;top:384.5px;width:19px;height:20px;background:#7e8d91;border-radius:3px"></div>
<div class="a" style="left:2272px;top:392.5px;width:11px;height:4px;background:#1f2124"></div>
<div class="a" style="left:2276px;top:388.5px;width:3.5px;height:12px;background:#1f2124"></div>
<div class="sph" style="left:2301px;top:378.5px"></div>
<div class="t" style="left:2346px;top:383.0px;font-size:24.4px;color:#86979b">opaque__fabric__jeans</div>
<div class="t" style="left:2881px;top:383.0px;font-size:24.4px;color:#86979b">Material</div>
<div class="a" style="left:2268px;top:424.8px;width:19px;height:20px;background:#7e8d91;border-radius:3px"></div>
<div class="a" style="left:2272px;top:432.8px;width:11px;height:4px;background:#1f2124"></div>
<div class="a" style="left:2276px;top:428.8px;width:3.5px;height:12px;background:#1f2124"></div>
<div class="sph" style="left:2301px;top:418.8px"></div>
<div class="t" style="left:2346px;top:423.3px;font-size:24.4px;color:#86979b">opaque__fabric__safetyvest</div>
<div class="t" style="left:2881px;top:423.3px;font-size:24.4px;color:#86979b">Material</div>
<div class="a" style="left:2268px;top:465.1px;width:19px;height:20px;background:#7e8d91;border-radius:3px"></div>
<div class="a" style="left:2272px;top:473.1px;width:11px;height:4px;background:#1f2124"></div>
<div class="a" style="left:2276px;top:469.1px;width:3.5px;height:12px;background:#1f2124"></div>
<div class="sph" style="left:2301px;top:459.1px"></div>
<div class="t" style="left:2346px;top:463.6px;font-size:24.4px;color:#86979b">opaque__leather__workboots</div>
<div class="t" style="left:2881px;top:463.6px;font-size:24.4px;color:#86979b">Material</div>
<div class="a" style="left:2268px;top:505.4px;width:19px;height:20px;background:#7e8d91;border-radius:3px"></div>
<div class="a" style="left:2272px;top:513.4px;width:11px;height:4px;background:#1f2124"></div>
<div class="a" style="left:2276px;top:509.4px;width:3.5px;height:12px;background:#1f2124"></div>
<div class="sph" style="left:2301px;top:499.4px"></div>
<div class="t" style="left:2346px;top:503.9px;font-size:24.4px;color:#86979b">opaque__fabric__shirt</div>
<div class="t" style="left:2881px;top:503.9px;font-size:24.4px;color:#86979b">Material</div>
<div class="a" style="left:2268px;top:545.7px;width:19px;height:20px;background:#7e8d91;border-radius:3px"></div>
<div class="a" style="left:2272px;top:553.7px;width:11px;height:4px;background:#1f2124"></div>
<div class="a" style="left:2276px;top:549.7px;width:3.5px;height:12px;background:#1f2124"></div>
<div class="sph" style="left:2301px;top:539.7px"></div>
<div class="t" style="left:2346px;top:544.2px;font-size:24.4px;color:#86979b">trans__organic__whitemaleskin</div>
<div class="t" style="left:2881px;top:544.2px;font-size:24.4px;color:#86979b">Material</div>
<div class="a" style="left:2227px;top:586.0px;width:19px;height:20px;background:#7e8d91;border-radius:3px"></div>
<div class="a" style="left:2231px;top:594.0px;width:11px;height:4px;background:#1f2124"></div>
<div class="a" style="left:2235px;top:590.0px;width:3.5px;height:12px;background:#1f2124"></div>
<svg style="left:2262px;top:583.0px" width="34" height="32" viewBox="0 0 34 32"><path d="M17 2 V17" stroke="#6fa06f" stroke-width="4" stroke-linecap="round"/><path d="M17 17 L3 28" stroke="#2aa8d0" stroke-width="4.5" stroke-linecap="round"/><path d="M17 17 L31 28" stroke="#b85a5a" stroke-width="4.5" stroke-linecap="round"/></svg>
<div class="t" style="left:2306px;top:584.5px;font-size:24.4px;color:#86979b">ManRoot</div>
<div class="t" style="left:2881px;top:584.5px;font-size:24.4px;color:#86979b">Xform</div>
<svg style="left:2825px;top:586.0px" width="30" height="20" viewBox="0 0 30 20"><path d="M1.5 10 Q15 -4 28.5 10 Q15 24 1.5 10 Z" fill="none" stroke="#7e8d91" stroke-width="2.6"/><circle cx="15" cy="10" r="6" fill="#7e8d91"/><path d="M11 8.5 Q12 5.5 15.5 5" stroke="#1f2124" stroke-width="1.8" fill="none"/></svg>
<div class="a" style="left:2169px;top:840px;width:928px;height:3px;background:#1a1b1d"></div>
<!-- ============ PROPERTY PANEL ============ -->
<div class="a" style="left:2169px;top:876px;width:928px;height:752px;background:#454545"></div>
<!--PROPERTY-->
<div class="a" style="left:2169px;top:843px;width:138px;height:33px;background:#454545;border-radius:6px 6px 0 0"></div>
<div class="t" style="left:2175px;top:847.4px;color:#dcdcdc">Property</div>
<div class="a" style="left:2309px;top:843px;width:300px;height:33px;background:#333436;border-radius:6px 6px 0 0"></div>
<div class="t" style="left:2316px;top:847.4px;color:#9b9b9b">Synthetic Data Recorder</div>
<div class="a" style="left:2169px;top:876px;width:928px;height:9px;background:#454545"></div>
<div class="a" style="left:2177px;top:885px;width:888px;height:743px;overflow:hidden;background:#1f2124"><div class="a" style="left:-2177px;top:-885px;width:3100px;height:1628px">
<div class="a" style="left:2189px;top:860px;width:863px;height:54.5px;background:#323433;border-radius:0 0 8px 8px"></div>
<div class="a" style="left:2189px;top:925px;width:863px;height:441px;background:#323433;border-radius:8px"></div>
<div class="a" style="left:2189px;top:1376px;width:863px;height:300px;background:#323433;border-radius:8px"></div>
<svg style="left:2200px;top:880px" width="16" height="18" viewBox="0 0 16 18"><path d="M1 1 L13 9 L1 17 Z" fill="#d4d4d4"/></svg>
<div class="t" style="left:2227px;top:876.6px;color:#d8d8d8">Description</div>
<svg style="left:2200px;top:946px" width="16" height="14" viewBox="0 0 16 14"><path d="M1 1 L15 1 L8 12 Z" fill="#d4d4d4"/></svg>
<div class="t" style="left:2231px;top:938.9px;color:#d8d8d8">Albedo</div>
<div class="lbl" style="left:2201px;top:991.7px">Base Color</div>
<div class="lbl" style="left:2201px;top:1037.5px">Albedo Map</div>
<div class="lbl" style="left:2201px;top:1088.5px">Checkpoint</div>
<div class="lbl" style="left:2201px;top:1134.7px">Albedo Map Color Space</div>
<div class="lbl" style="left:2201px;top:1181.2px">Albedo Desaturation</div>
<div class="lbl" style="left:2201px;top:1227.1px">Albedo Add</div>
<div class="lbl" style="left:2201px;top:1273.7px">Albedo Brightness</div>
<div class="lbl" style="left:2201px;top:1319.6px">Color Tint</div>
<div class="a" style="left:2549px;top:991px;width:30px;height:33px;background:#a85454;border-radius:6px 0 0 6px"></div>
<div class="a" style="left:2549px;top:1036px;width:30px;height:38px;background:#1f2124;border-radius:4px"></div>
<div class="a" style="left:2549px;top:1133px;width:30px;height:33px;background:#1f2124;border-radius:4px"></div>
<div class="a" style="left:2549px;top:1179px;width:30px;height:35px;background:#1f2124;border-radius:4px"></div>
<div class="a" style="left:2549px;top:1224px;width:30px;height:35px;background:#454545;border-radius:4px"></div>
<div class="a" style="left:2549px;top:1271px;width:30px;height:35px;background:#454545;border-radius:4px"></div>
<div class="a" style="left:2550px;top:1319px;width:27px;height:35px;background:#a85454;border-radius:6px 0 0 6px"></div>
<div class="t" style="left:2554px;top:1324px;font-size:25px;color:#e6e6e6">R</div>
<div class="a" style="left:2577px;top:1320px;width:37px;height:34px;background:#454545"></div>
<div class="a" style="left:2614px;top:1320px;width:41px;height:34px;background:#1f2124;border-radius:0 4px 4px 0"></div>
<div class="a" style="left:2577px;top:1320px;width:78px;height:34px;overflow:hidden"><div class="t" style="left:1px;top:2.5px;font-size:23px;color:#d8d8d8">0.95720</div></div>
<div class="a" style="left:2663px;top:1320px;width:25px;height:28px;background:#4a7598;border-radius:0 0 5px 5px"></div>
<div class="a" style="left:2696px;top:1319px;width:28px;height:35px;background:#6a9e6e;border-radius:6px 0 0 6px"></div>
<div class="t" style="left:2699px;top:1324px;font-size:25px;color:#e6e6e6">G</div>
<div class="a" style="left:2724px;top:1320px;width:33px;height:34px;background:#454545"></div>
<div class="a" style="left:2757px;top:1320px;width:36px;height:34px;background:#1f2124;border-radius:0 4px 4px 0"></div>
<div class="a" style="left:2724px;top:1320px;width:69px;height:34px;overflow:hidden"><div class="t" style="left:1px;top:2.5px;font-size:23px;color:#d8d8d8">0.95720</div></div>
<div class="a" style="left:2802px;top:1320px;width:24px;height:28px;background:#4a7598;border-radius:0 0 5px 5px"></div>
<div class="a" style="left:2834px;top:1319px;width:28px;height:35px;background:#4a7598;border-radius:6px 0 0 6px"></div>
<div class="t" style="left:2838px;top:1324px;font-size:25px;color:#e6e6e6">B</div>
<div class="a" style="left:2864px;top:1320px;width:3px;height:34px;background:#454545"></div>
<div class="a" style="left:2867px;top:1320px;width:64px;height:34px;background:#1f2124;border-radius:0 4px 4px 0"></div>
<div class="t" style="left:2866px;top:1322.5px;font-size:23px;color:#d8d8d8">0.135</div>
<div class="a" style="left:2940px;top:1320px;width:24px;height:28px;background:#4a7598;border-radius:0 0 5px 5px"></div>
<div class="a" style="left:2973px;top:1320px;width:35px;height:32px;background:linear-gradient(#e2e022,#f4f122);border-radius:0 0 4px 4px;box-shadow:1px 1px 0 #15152a"></div>
<div class="a" style="left:3016px;top:1320px;width:25px;height:28px;background:#4a7598;border-radius:0 0 5px 5px"></div>
<svg style="left:2200px;top:1397px" width="16" height="14" viewBox="0 0 16 14"><path d="M1 1 L15 1 L8 12 Z" fill="#d4d4d4"/></svg>
<div class="t" style="left:2231px;top:1391.9px;color:#d8d8d8">Reflectivity</div>
<div class="lbl" style="left:2201px;top:1443.7px">Roughness Amount</div>
<div class="lbl" style="left:2201px;top:1489.3px">Roughness Map Influence</div>
<div class="lbl" style="left:2201px;top:1536.1px">Roughness Map</div>
<div class="lbl" style="left:2201px;top:1581.3px">Roughness Map Color Space</div>
<div class="fld" style="left:2549px;top:1441px;width:459px;height:36px"></div>
<div class="a" style="left:2549px;top:1441px;width:230px;height:36px;background:#454545;border-radius:4px 0 0 4px"></div>
<div class="t" style="left:2761px;top:1446px;color:#e0e0e0">0.5</div>
<div class="fld" style="left:2549px;top:1487px;width:459px;height:35px"></div>
<div class="t" style="left:2761px;top:1492px;color:#e0e0e0">0.0</div>
<div class="fld" style="left:2549px;top:1534px;width:407px;height:35px"></div>
<div class="a" style="left:2963px;top:1534px;width:39px;height:35px;background:#2b2d30;border-radius:4px"></div>
<svg style="left:2968px;top:1539px" width="30" height="24" viewBox="0 0 30 24"><path d="M1 3 Q1 1 3 1 H10 L13 4 H26 Q29 4 29 7 V21 Q29 23 27 23 H3 Q1 23 1 21 Z" fill="#b9bfc2"/></svg>
<div class="fld" style="left:2549px;top:1580px;width:459px;height:34px"></div>
<div class="t" style="left:2556px;top:1584.5px;color:#e6e6e6">raw</div>
<div class="a" style="left:2973px;top:1580px;width:1px;height:34px;background:#2a2c2f"></div>
<svg style="left:2981px;top:1589px" width="22" height="18" viewBox="0 0 22 18"><path d="M0 0 H21 L10.5 17 Z" fill="#e6e6e6"/></svg>
<div class="fld" style="left:2549px;top:1626px;width:459px;height:10px"></div>
<div class="a" style="left:3024px;top:1451px;width:9px;height:9px;background:#4a4b4c;border-radius:2px"></div>
<div class="a" style="left:3024px;top:1497px;width:9px;height:9px;background:#4a4b4c;border-radius:2px"></div>
<div class="a" style="left:3024px;top:1544px;width:9px;height:9px;background:#4a4b4c;border-radius:2px"></div>
<div class="a" style="left:3024px;top:1590px;width:9px;height:9px;background:#4a4b4c;border-radius:2px"></div>
</div></div>
<!--PICKER-->
<!-- popup -->
<div class="a" style="left:2555.5px;top:815.5px;width:538px;height:511.5px;background:#383b3e;border-radius:3px 3px 8px 3px"></div>
<div class="a" style="left:2563.5px;top:823.5px;width:378px;height:378px;border-radius:12px 0 0 0;background:linear-gradient(to bottom,rgba(0,0,0,0),#000),linear-gradient(to right,#fff,#ff0)"></div>
<div class="a" style="left:2945px;top:823.5px;width:34px;height:378px;background:linear-gradient(to bottom,#f00 0%,#ff0 16.67%,#0f0 33.33%,#0ff 50%,#00f 66.67%,#f0f 83.33%,#f00 100%)"></div>
<svg style="left:2944px;top:879px" width="36" height="15" viewBox="0 0 36 15"><path d="M1 0.5 L8 7.5 L1 14.5 Z" fill="#fff"/><path d="M35 0.5 L28 7.5 L35 14.5 Z" fill="#fff"/></svg>
<svg style="left:2880px;top:832px" width="16" height="16" viewBox="0 0 16 16"><circle cx="8" cy="8" r="5.5" fill="#f5f020" stroke="#d0d0c0" stroke-width="1.6"/></svg>
<div class="t" style="left:2983px;top:825.7px;color:#d8d8d8">Current</div>
<div class="a" style="left:2983px;top:857px;width:103px;height:68px;background:#f4f422;border-radius:5px;box-shadow:0 -1px 0 #15152a,1px 0 0 #15152a"></div>
<!-- fields -->
<div class="fld" style="left:2563.5px;top:1206px;width:136px;height:34.5px"></div>
<div class="fld" style="left:2703px;top:1206px;width:136px;height:34.5px"></div>
<div class="fld" style="left:2842px;top:1206px;width:137px;height:34.5px"></div>
<div class="fld" style="left:2563.5px;top:1246px;width:136px;height:34.5px"></div>
<div class="fld" style="left:2703px;top:1246px;width:136px;height:34.5px"></div>
<div class="fld" style="left:2842px;top:1246px;width:137px;height:34.5px"></div>
<div class="fld" style="left:2563.5px;top:1285.5px;width:415.5px;height:34px"></div>
<div class="t" style="left:2563.5px;top:1212px;width:136px;text-align:center;font-size:23.7px;color:#dcdcdc">R:0.957</div>
<div class="t" style="left:2703px;top:1212px;width:136px;text-align:center;font-size:23.7px;color:#dcdcdc">G:0.957</div>
<div class="t" style="left:2842px;top:1212px;width:137px;text-align:center;font-size:23.7px;color:#dcdcdc">B:0.135</div>
<div class="t" style="left:2563.5px;top:1251.5px;width:136px;text-align:center;font-size:23.7px;color:#dcdcdc">H:0.167</div>
<div class="t" style="left:2703px;top:1251.5px;width:136px;text-align:center;font-size:23.7px;color:#dcdcdc">S:0.859</div>
<div class="t" style="left:2842px;top:1251.5px;width:137px;text-align:center;font-size:23.7px;color:#dcdcdc">V:0.957</div>
<div class="t" style="left:2571px;top:1290px;font-size:23.7px;color:#dcdcdc">#F4F422</div>
<!-- red dashed annotation -->
<svg style="left:0;top:0" width="3100" height="1628" viewBox="0 0 3100 1628">
<path d="M2574.8 820.5 H3069.5 A28 28 0 0 1 3097.5 848.5 V1200.5 A20 20 0 0 1 3077.5 1220.5 H2578.5 A20 20 0 0 1 2558.5 1200.5 V862" fill="none" stroke="#ff0000" stroke-width="7" stroke-dasharray="21.4 7.61"/>
<path d="M2558.5 855 V840.5 A20 20 0 0 1 2568.5 823.2" fill="none" stroke="#ff0000" stroke-width="7"/>
</svg>

</body></html>
